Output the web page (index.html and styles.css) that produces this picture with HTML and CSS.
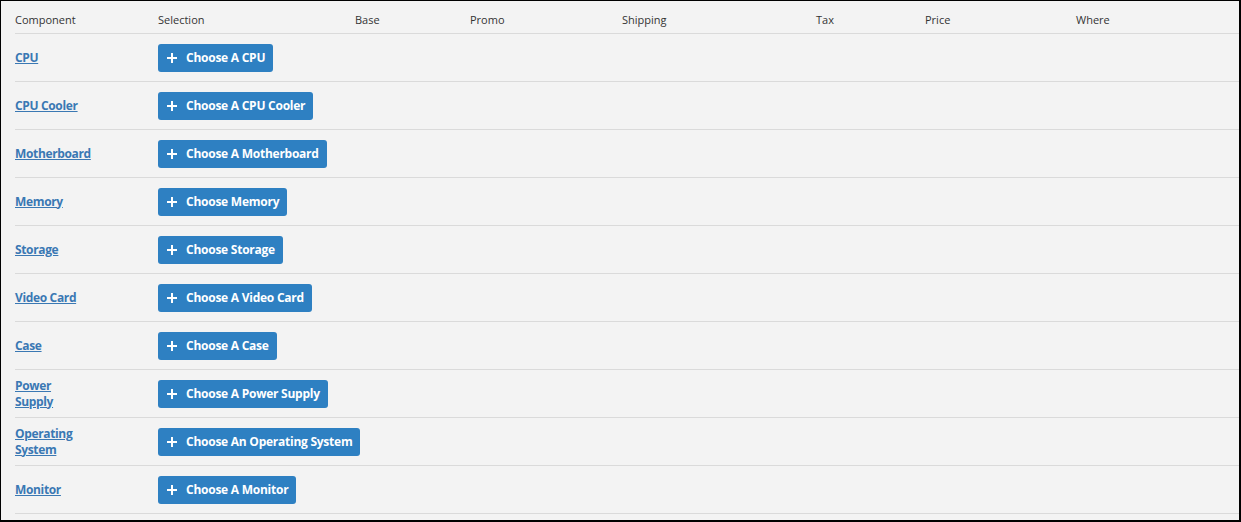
FILE: index.html
```html
<!DOCTYPE html>
<html>
<head>
<meta charset="utf-8">
<link rel="stylesheet" href="styles.css">
</head>
<body>
<div class="frame">
  <div class="table">
    <div class="row head">
      <div>Component</div><div>Selection</div><div>Base</div><div>Promo</div><div>Shipping</div><div>Tax</div><div>Price</div><div>Where</div>
    </div>
    <div class="row"><div class="comp"><a href="#">CPU</a></div><div class="sel"><a class="btn" href="#"><span class="plus"></span>Choose A CPU</a></div></div>
    <div class="row"><div class="comp"><a href="#">CPU Cooler</a></div><div class="sel"><a class="btn" href="#"><span class="plus"></span>Choose A CPU Cooler</a></div></div>
    <div class="row"><div class="comp"><a href="#">Motherboard</a></div><div class="sel"><a class="btn" href="#"><span class="plus"></span>Choose A Motherboard</a></div></div>
    <div class="row"><div class="comp"><a href="#">Memory</a></div><div class="sel"><a class="btn" href="#"><span class="plus"></span>Choose Memory</a></div></div>
    <div class="row"><div class="comp"><a href="#">Storage</a></div><div class="sel"><a class="btn" href="#"><span class="plus"></span>Choose Storage</a></div></div>
    <div class="row"><div class="comp"><a href="#">Video Card</a></div><div class="sel"><a class="btn" href="#"><span class="plus"></span>Choose A Video Card</a></div></div>
    <div class="row"><div class="comp"><a href="#">Case</a></div><div class="sel"><a class="btn" href="#"><span class="plus"></span>Choose A Case</a></div></div>
    <div class="row"><div class="comp"><a href="#">Power Supply</a></div><div class="sel"><a class="btn" href="#"><span class="plus"></span>Choose A Power Supply</a></div></div>
    <div class="row"><div class="comp"><a href="#">Operating System</a></div><div class="sel"><a class="btn" href="#"><span class="plus"></span>Choose An Operating System</a></div></div>
    <div class="row"><div class="comp"><a href="#">Monitor</a></div><div class="sel"><a class="btn" href="#"><span class="plus"></span>Choose A Monitor</a></div></div>
  </div>
</div>
</body>
</html>
```
FILE: styles.css
```css
* { box-sizing: border-box; }
html, body { margin: 0; padding: 0; }
body {
  width: 1241px;
  height: 522px;
  overflow: hidden;
  background: #f3f3f3;
  font-family: "Open Sans", "Noto Sans", sans-serif;
}
.frame {
  width: 1241px;
  height: 522px;
  border-top: 1px solid #000;
  border-left: 1px solid #000;
  border-right: 2px solid #000;
  border-bottom: 2px solid #000;
  background: #f3f3f3;
  padding-left: 14px;
}
.table { display: flex; flex-direction: column; }
.row {
  display: grid;
  grid-template-columns: 143px 197px 115px 152px 194px 109px 151px 1fr;
  height: 48px;
  border-bottom: 1px solid #dadada;
  align-items: center;
}
.row.head {
  height: 33px;
  font-size: 11px;
  color: #333;
  padding-top: 4px;
}
.comp { width: 74px; line-height: 15px; padding-bottom: 2px; }
.comp a {
  color: #3a78b3;
  font-weight: 700;
  font-size: 12px;
  letter-spacing: -0.35px;
  text-decoration: underline;
}
.btn {
  display: inline-flex;
  align-items: center;
  white-space: nowrap;
  height: 28px;
  padding: 0 8px 0 9px;
  background: #2e80c2;
  color: #fff;
  border-radius: 3px;
  font-weight: 700;
  font-size: 12px;
  text-decoration: none;
  letter-spacing: -0.25px;
}
.plus {
  position: relative;
  flex: none;
  width: 10px;
  height: 10px;
  margin-right: 9px;
}
.plus::before, .plus::after {
  content: "";
  position: absolute;
  background: #fff;
}
.plus::before { left: 0; right: 0; top: 4px; height: 2px; }
.plus::after { top: 0; bottom: 0; left: 4px; width: 2px; }
```
